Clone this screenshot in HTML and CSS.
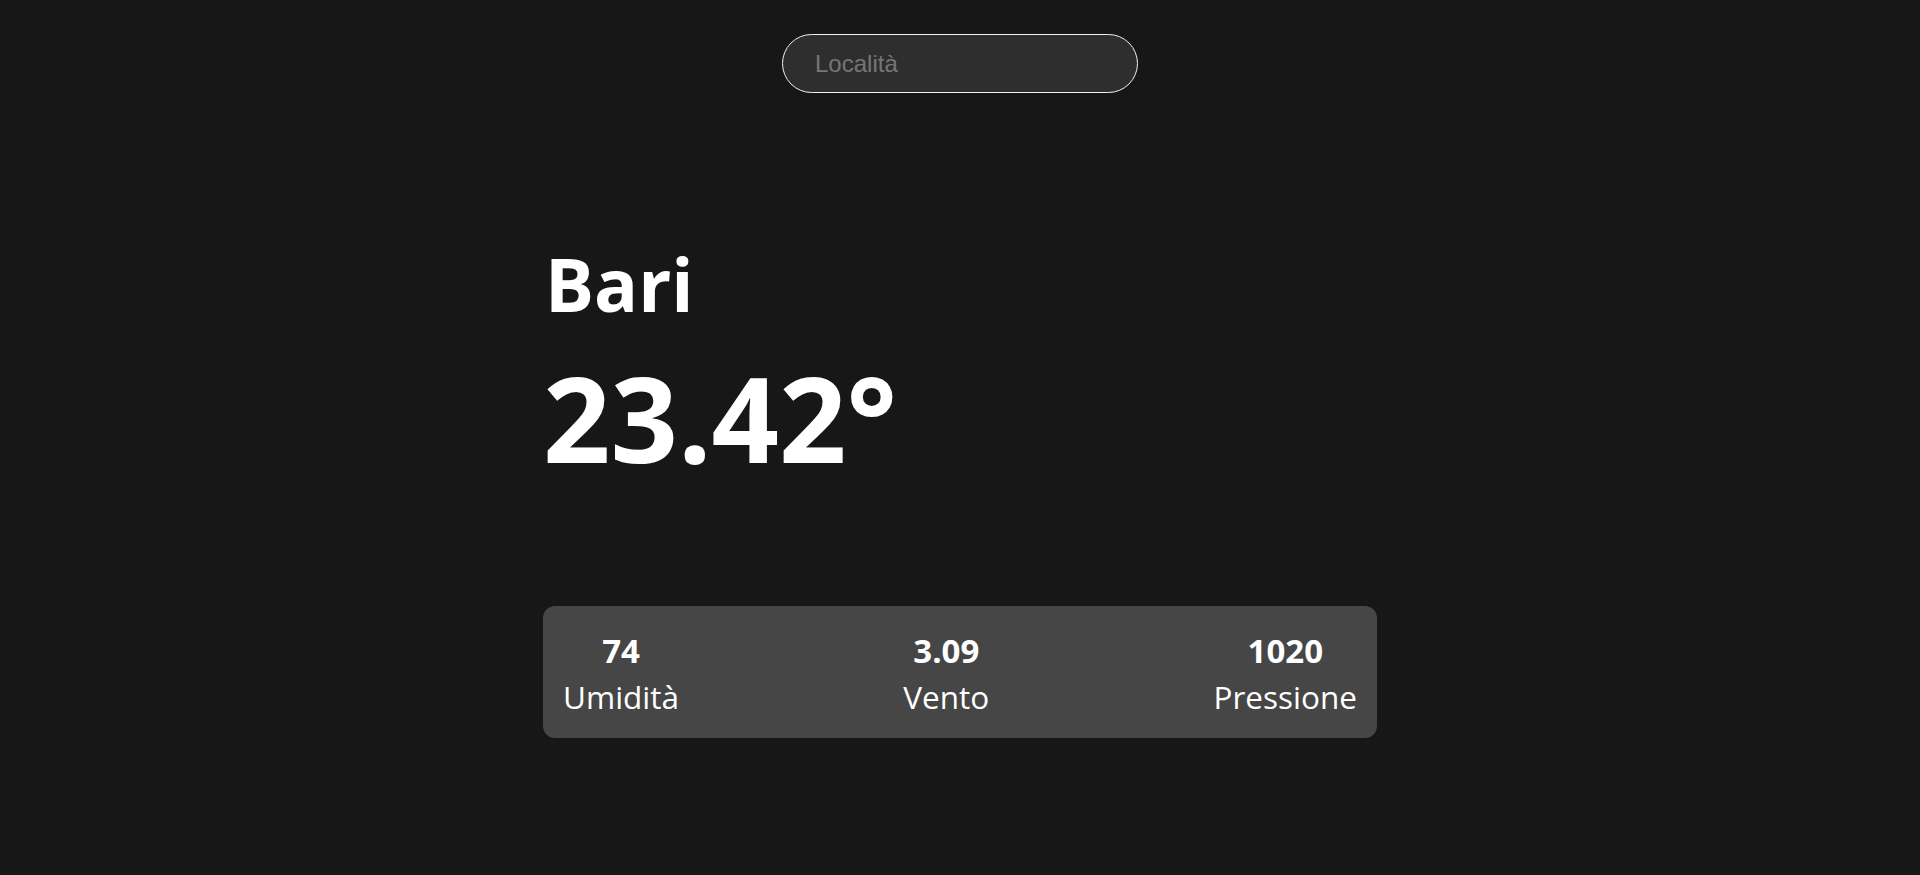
FILE: index.html
```html
<!DOCTYPE html>
<html lang="it">
<head>
<meta charset="utf-8">
<title>Meteo</title>
<link rel="stylesheet" href="styles.css">
</head>
<body>
<div class="app">
  <div class="search">
    <input class="search-input" type="text" placeholder="Località">
  </div>
  <div class="container">
    <div class="top">
      <div class="location">Bari</div>
      <div class="temp">23.42°</div>
    </div>
    <div class="bottom">
      <div class="stat">
        <div class="stat-value">74</div>
        <div class="stat-label">Umidità</div>
      </div>
      <div class="stat">
        <div class="stat-value">3.09</div>
        <div class="stat-label">Vento</div>
      </div>
      <div class="stat">
        <div class="stat-value">1020</div>
        <div class="stat-label">Pressione</div>
      </div>
    </div>
  </div>
</div>
</body>
</html>
```
FILE: styles.css
```css
* { box-sizing: border-box; }
html, body {
  margin: 0;
  padding: 0;
  height: 100%;
}
body {
  background: #171717;
  color: #ffffff;
  font-family: "Open Sans", "Noto Sans", sans-serif;
}
.app {
  width: 100%;
  min-height: 100%;
}
.search {
  display: flex;
  justify-content: center;
  padding-top: 34px;
}
.search-input {
  width: 356px;
  height: 59px;
  padding: 0 32px;
  border: 1px solid #f2f2f2;
  border-radius: 30px;
  background: #2e2e2e;
  color: #ffffff;
  font-family: "Liberation Sans", Arial, sans-serif;
  font-size: 24px;
  outline: none;
}
.search-input::placeholder {
  color: #767676;
}
.container {
  width: 834px;
  margin: 0 auto;
  display: flex;
  flex-direction: column;
}
.top {
  padding-top: 154px;
}
.location {
  font-size: 73px;
  font-weight: 700;
  line-height: 1;
  margin-left: 2px;
}
.temp {
  font-size: 118px;
  font-weight: 700;
  line-height: 1;
  margin-top: 39px;
}
.bottom {
  margin-top: 129px;
  display: flex;
  justify-content: space-between;
  align-items: center;
  height: 132px;
  padding: 0 20px;
  background: #464646;
  border-radius: 12px;
}
.stat {
  display: flex;
  flex-direction: column;
  align-items: center;
}
.stat-value {
  font-size: 33px;
  font-weight: 700;
  line-height: 49px;
}
.stat-label {
  font-size: 31.5px;
  line-height: 44px;
}
```
